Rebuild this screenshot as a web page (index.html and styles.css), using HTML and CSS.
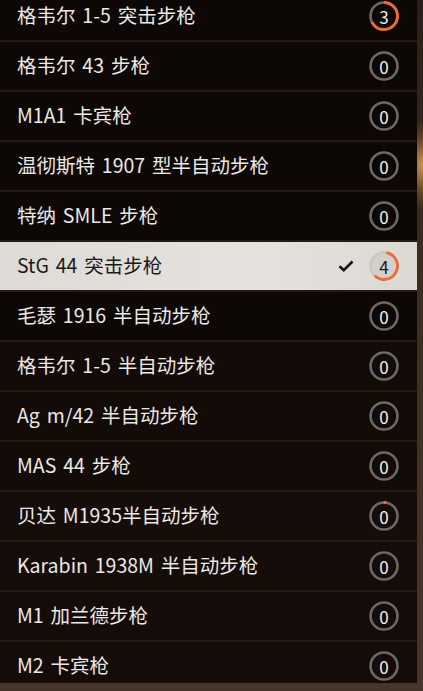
FILE: index.html
```html
<!DOCTYPE html>
<html lang="zh">
<head>
<meta charset="utf-8">
<link rel="stylesheet" href="styles.css">
</head>
<body>
<div class="screen">
  <div class="glow"></div>
  <ul class="list">
    <li class="row"><span class="name">格韦尔 1-5 突击步枪</span><span class="badge"><svg viewBox="0 0 30 30"><circle class="track" cx="15" cy="15" r="13.5"/><circle class="prog" cx="15" cy="15" r="13.5" style="stroke-dasharray:57 85" transform="rotate(-90 15 15)"/></svg><span class="num">3</span></span></li>
    <li class="row"><span class="name">格韦尔 43 步枪</span><span class="badge"><svg viewBox="0 0 30 30"><circle class="track" cx="15" cy="15" r="13.5"/></svg><span class="num">0</span></span></li>
    <li class="row"><span class="name">M1A1 卡宾枪</span><span class="badge"><svg viewBox="0 0 30 30"><circle class="track" cx="15" cy="15" r="13.5"/></svg><span class="num">0</span></span></li>
    <li class="row"><span class="name">温彻斯特 1907 型半自动步枪</span><span class="badge"><svg viewBox="0 0 30 30"><circle class="track" cx="15" cy="15" r="13.5"/></svg><span class="num">0</span></span></li>
    <li class="row"><span class="name">特纳 SMLE 步枪</span><span class="badge"><svg viewBox="0 0 30 30"><circle class="track" cx="15" cy="15" r="13.5"/></svg><span class="num">0</span></span></li>
    <li class="row selected"><span class="name">StG 44 突击步枪</span><svg class="check" viewBox="0 0 16 12"><path d="M1.5 6.2 L5.8 10.2 L14.5 1.5"/></svg><span class="badge"><svg viewBox="0 0 30 30"><circle class="track" cx="15" cy="15" r="13.5"/><circle class="prog" cx="15" cy="15" r="13.5" style="stroke-dasharray:50 85" transform="rotate(-80 15 15)"/></svg><span class="num">4</span></span></li>
    <li class="row"><span class="name">毛瑟 1916 半自动步枪</span><span class="badge"><svg viewBox="0 0 30 30"><circle class="track" cx="15" cy="15" r="13.5"/></svg><span class="num">0</span></span></li>
    <li class="row"><span class="name">格韦尔 1-5 半自动步枪</span><span class="badge"><svg viewBox="0 0 30 30"><circle class="track" cx="15" cy="15" r="13.5"/></svg><span class="num">0</span></span></li>
    <li class="row"><span class="name">Ag m/42 半自动步枪</span><span class="badge"><svg viewBox="0 0 30 30"><circle class="track" cx="15" cy="15" r="13.5"/></svg><span class="num">0</span></span></li>
    <li class="row"><span class="name">MAS 44 步枪</span><span class="badge"><svg viewBox="0 0 30 30"><circle class="track" cx="15" cy="15" r="13.5"/></svg><span class="num">0</span></span></li>
    <li class="row"><span class="name">贝达 M1935半自动步枪</span><span class="badge"><svg viewBox="0 0 30 30"><circle class="track" cx="15" cy="15" r="13.5"/><circle class="prog" cx="15" cy="15" r="13.5" style="stroke-dasharray:3 85" transform="rotate(-92 15 15)"/></svg><span class="num">0</span></span></li>
    <li class="row"><span class="name">Karabin 1938M 半自动步枪</span><span class="badge"><svg viewBox="0 0 30 30"><circle class="track" cx="15" cy="15" r="13.5"/></svg><span class="num">0</span></span></li>
    <li class="row"><span class="name">M1 加兰德步枪</span><span class="badge"><svg viewBox="0 0 30 30"><circle class="track" cx="15" cy="15" r="13.5"/></svg><span class="num">0</span></span></li>
    <li class="row"><span class="name">M2 卡宾枪</span><span class="badge"><svg viewBox="0 0 30 30"><circle class="track" cx="15" cy="15" r="13.5"/></svg><span class="num">0</span></span></li>
  </ul>
</div>
</body>
</html>
```
FILE: styles.css
```css
html, body {
  margin: 0;
  padding: 0;
  background: #3a2c21;
}
.screen {
  position: relative;
  width: 423px;
  height: 691px;
  overflow: hidden;
  background: linear-gradient(180deg, #2a1f17 0%, #3c2d21 40%, #45352a 100%);
  font-family: "Noto Sans CJK SC", "Noto Sans", sans-serif;
}
.glow {
  position: absolute;
  right: -30px;
  top: 120px;
  width: 60px;
  height: 90px;
  background: radial-gradient(ellipse at center, rgba(230,170,90,0.85) 0%, rgba(200,130,60,0.35) 40%, rgba(0,0,0,0) 70%);
}
.list {
  position: relative;
  list-style: none;
  margin: 0;
  padding: 0;
  width: 417px;
  height: 683px;
  overflow: hidden;
  display: flex;
  flex-direction: column;
  gap: 2px;
  background: #261a13;
}
.list::before {
  content: "";
  display: block;
  height: 0;
  margin-top: -10px;
}
.row {
  flex: 0 0 48px;
  height: 48px;
  box-sizing: border-box;
  display: flex;
  align-items: center;
  padding: 0 18px 3px 17px;
  background: #0d0806;
  color: #ece8e3;
  font-size: 19.5px;
}
.row:nth-child(n+8) { background: #120b08; }
.row:nth-child(n+11) { background: #150d0a; }
.row:nth-child(n+13) { background: #150c09; }
.name {
  flex: 1;
  white-space: nowrap;
  word-spacing: 2.5px;
}
.badge {
  position: relative;
  width: 30px;
  height: 30px;
  margin-top: 3px;
  display: flex;
  align-items: center;
  justify-content: center;
}
.badge svg {
  position: absolute;
  inset: 0;
  width: 30px;
  height: 30px;
}
.track {
  fill: none;
  stroke: #6b6865;
  stroke-width: 2.6;
}
.prog {
  fill: none;
  stroke: #ef6a35;
  stroke-width: 2.8;
}
.num {
  position: relative;
  font-size: 17px;
  line-height: 1;
  color: #f3f0ec;
}
.selected {
  background: linear-gradient(90deg, #dedad6 0%, #e5e2de 60%, #dcd8d4 100%) !important;
  color: #1c1a18;
}
.selected .track {
  fill: #d3cfcb;
  stroke: #cbc7c3;
}
.selected .num { color: #1c1a18; }
.check {
  width: 16px;
  height: 12px;
  margin-right: 15px;
  margin-top: 3px;
  fill: none;
  stroke: #141210;
  stroke-width: 2.6;
}
```
